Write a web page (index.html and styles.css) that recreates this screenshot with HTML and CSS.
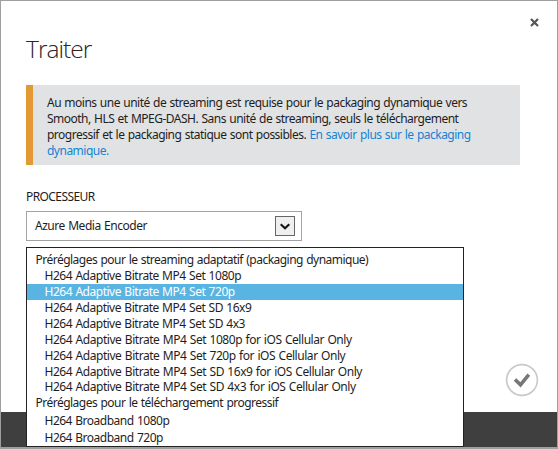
FILE: index.html
```html
<!DOCTYPE html>
<html lang="fr">
<head>
<meta charset="utf-8">
<title>Traiter</title>
<link rel="stylesheet" href="styles.css">
</head>
<body>
<main class="dialog">
  <button class="close" aria-label="Fermer"><svg width="9" height="9" viewBox="0 0 9 9"><path d="M1 1 8 8M8 1 1 8"/></svg></button>
  <h1>Traiter</h1>
  <p class="note">Au moins une unité de streaming est requise pour le packaging dynamique vers<br>Smooth, HLS et MPEG-DASH. Sans unité de streaming, seuls le téléchargement<br>progressif et le packaging statique sont possibles. <a>En savoir plus sur le packaging</a><br><a>dynamique.</a></p>
  <label class="label">PROCESSEUR</label>
  <div class="select"><span>Azure Media Encoder</span><span class="arrow"><svg width="10" height="7" viewBox="0 0 10 7"><path d="M.7 1.2 5 5.2 9.3 1.2"/></svg></span></div>
  <ul class="menu">
    <li class="group">Préréglages pour le streaming adaptatif (packaging dynamique)</li>
    <li>H264 Adaptive Bitrate MP4 Set 1080p</li>
    <li class="selected">H264 Adaptive Bitrate MP4 Set 720p</li>
    <li>H264 Adaptive Bitrate MP4 Set SD 16x9</li>
    <li>H264 Adaptive Bitrate MP4 Set SD 4x3</li>
    <li class="long">H264 Adaptive Bitrate MP4 Set 1080p for iOS Cellular Only</li>
    <li class="long">H264 Adaptive Bitrate MP4 Set 720p for iOS Cellular Only</li>
    <li class="long short">H264 Adaptive Bitrate MP4 Set SD 16x9 for iOS Cellular Only</li>
    <li class="long">H264 Adaptive Bitrate MP4 Set SD 4x3 for iOS Cellular Only</li>
    <li class="group last">Préréglages pour le téléchargement progressif</li>
    <li class="broad">H264 Broadband 1080p</li>
    <li class="broad">H264 Broadband 720p</li>
  </ul>
  <button class="ok" aria-label="Valider"><svg width="34" height="34" viewBox="0 0 34 34"><circle cx="17" cy="17" r="15.4"/><path d="M10 16.5 15.5 21.8 23.8 11.6"/></svg></button>
  <footer></footer>
</main>
</body>
</html>
```
FILE: styles.css
```css
* { box-sizing: border-box; }
body {
  margin: 0;
  font: 12px/16px "Noto Sans", "Open Sans", sans-serif;
  word-spacing: .7px;
  color: #1e1e1e;
  background: #fff;
}
.dialog {
  position: relative;
  display: flex;
  flex-direction: column;
  width: 558px;
  height: 449px;
  padding: 32px 37px 0 25px;
  border: 1px solid #9f9f9f;
  border-bottom-width: 2px;
}
button { padding: 0; border: 0; background: none; }
svg { display: block; fill: none; }
.close { position: absolute; top: 17px; right: 18px; }
.close svg { stroke: #555; stroke-width: 2.2; }
h1 {
  margin: 0 0 21px;
  font: 300 24.5px/31px "Open Sans", sans-serif;
  letter-spacing: -.95px;
  color: #2b2528;
}
.note {
  height: 80px;
  margin: 0 0 24px;
  padding: 10px 0 0 14px;
  border-left: 7px solid #e39a35;
  background: #e1e2e4;
  white-space: nowrap;
  letter-spacing: -.51px;
}
.note a { color: #1583d2; }
.label { height: 16px; margin-bottom: 6px; letter-spacing: -.58px; }
.select {
  display: flex;
  align-items: center;
  justify-content: space-between;
  width: 276px;
  height: 30px;
  padding: 0 6px 0 8px;
  border: 1px solid #a3a3a3;
  letter-spacing: -.47px;
}
.arrow {
  display: grid;
  place-items: center;
  width: 20px;
  height: 20px;
  border: 1px solid #666;
  background: #efefef;
}
.arrow svg { stroke: #151515; stroke-width: 2.2; }
.menu {
  position: absolute;
  z-index: 1;
  top: 246px;
  left: 25px;
  width: 438px;
  height: 200px;
  margin: 0;
  padding: 4px 0 0;
  border: 1px solid #222;
  background: #fff;
  list-style: none;
  white-space: nowrap;
  letter-spacing: -.48px;
}
.menu li { padding-left: 17.5px; height: 16px; }
.menu .group { padding-left: 8.5px; letter-spacing: -.52px; }
.menu .long { letter-spacing: -.45px; }
.menu .short { height: 15px; }
.menu .last { height: 18px; }
.menu .broad { height: 17px; letter-spacing: -.5px; }
.menu .selected { color: #fff; background: #5ab4e2; }
.ok { position: absolute; top: 362px; right: 18px; }
.ok circle { stroke: #c9c9c9; stroke-width: 1.6; }
.ok path { stroke: #777; stroke-width: 3.6; }
footer {
  position: absolute;
  right: 0;
  bottom: 0;
  left: 0;
  height: 35px;
  background: #3f3f3f;
}
```
